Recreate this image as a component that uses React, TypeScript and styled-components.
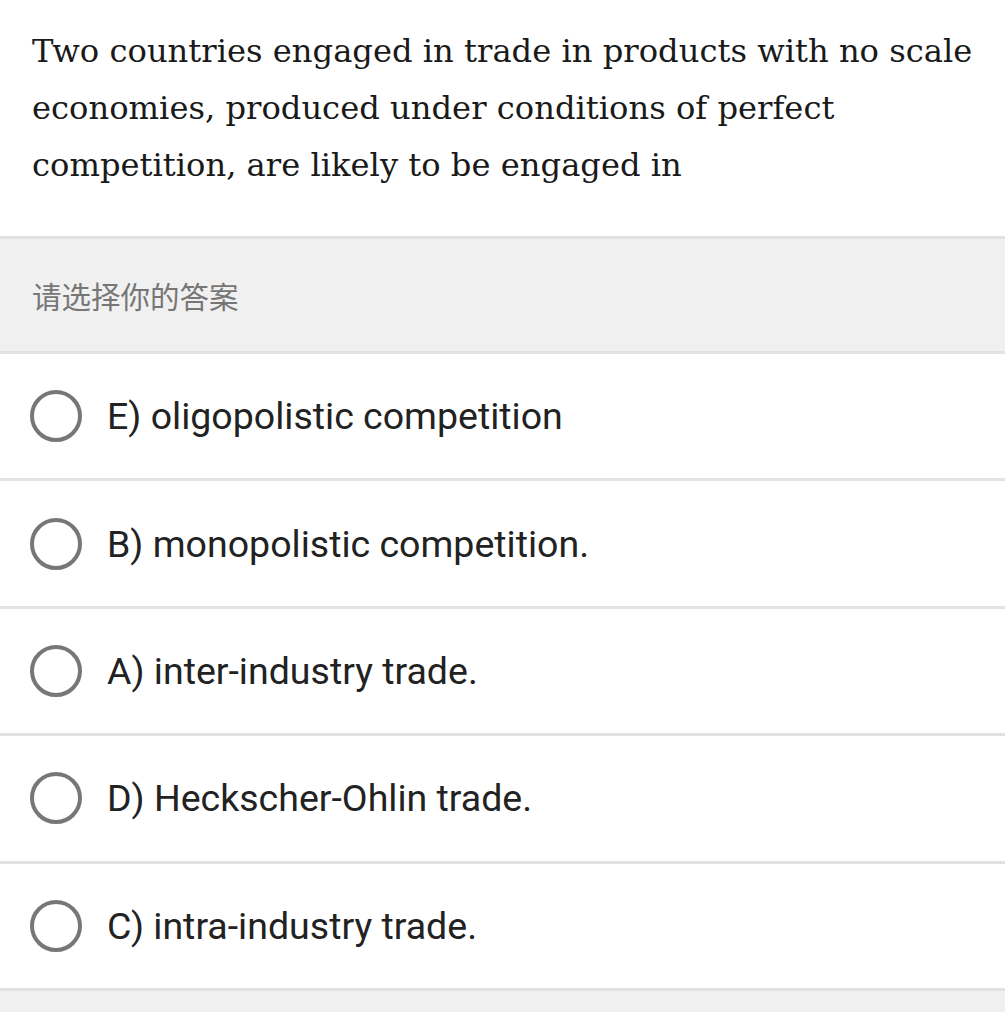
import * as React from "react";
import styled, { createGlobalStyle } from "styled-components";

let GlobalStyle = createGlobalStyle`
  html, body {
    margin: 0;
    padding: 0;
    background: #ffffff;
  }
`;

let options = [
  { id: "E", text: "E) oligopolistic competition" },
  { id: "B", text: "B) monopolistic competition." },
  { id: "A", text: "A) inter-industry trade." },
  { id: "D", text: "D) Heckscher-Ohlin trade." },
  { id: "C", text: "C) intra-industry trade." },
];

let App = () => {
  let [picked, setPicked] = React.useState<string | null>(null);

  return (
    <React.Fragment>
      <GlobalStyle />
      <Page>
        <Question>
          Two countries engaged in trade in products with no scale economies,
          produced under conditions of perfect competition, are likely to be
          engaged in
        </Question>
        <Prompt>请选择你的答案</Prompt>
        <OptionList>
          {options.map(({ id, text }) => (
            <OptionRow key={id} onClick={() => setPicked(id)}>
              <Radio isChecked={picked === id} />
              <OptionText>{text}</OptionText>
            </OptionRow>
          ))}
        </OptionList>
        <Footer />
      </Page>
    </React.Fragment>
  );
};

interface RadioProps {
  readonly isChecked: boolean;
}

let Page = styled.div`
  width: 1005px;
  display: flex;
  flex-direction: column;
`;

let Question = styled.p`
  margin: 0;
  height: 239px;
  box-sizing: border-box;
  padding: 23px 32px 0;
  font-family: "DejaVu Serif", "Liberation Serif", serif;
  font-size: 32.2px;
  line-height: 57px;
  color: #1a1a1a;
  border-bottom: 3px solid #e2e2e2;
`;

let Prompt = styled.div`
  height: 112px;
  display: flex;
  align-items: center;
  padding: 0 32px;
  background: #f0f0f0;
  border-bottom: 3px solid #e2e2e2;
  font-family: "Noto Sans CJK SC", "Noto Sans", sans-serif;
  font-size: 29.5px;
  color: #767676;
`;

let OptionList = styled.ul`
  list-style: none;
  margin: 0;
  padding: 0;
`;

let OptionRow = styled.li`
  height: 124.4px;
  display: flex;
  align-items: center;
  gap: 25px;
  padding-left: 30px;
  border-bottom: 3px solid #e2e2e2;
  cursor: pointer;
`;

let Radio = styled.span<RadioProps>`
  width: 52px;
  height: 52px;
  box-sizing: border-box;
  border-radius: 50%;
  border: 4px solid ${props => (props.isChecked ? "#3f7ee8" : "#777777")};
  flex-shrink: 0;
  background: ${props =>
    props.isChecked ? "radial-gradient(#3f7ee8 45%, transparent 48%)" : "transparent"};
`;

let OptionText = styled.span`
  font-family: Roboto, "Noto Sans", sans-serif;
  font-size: 37.5px;
  color: #222222;
`;

let Footer = styled.div`
  height: 21px;
  background: #f0f0f0;
`;

export default App;
